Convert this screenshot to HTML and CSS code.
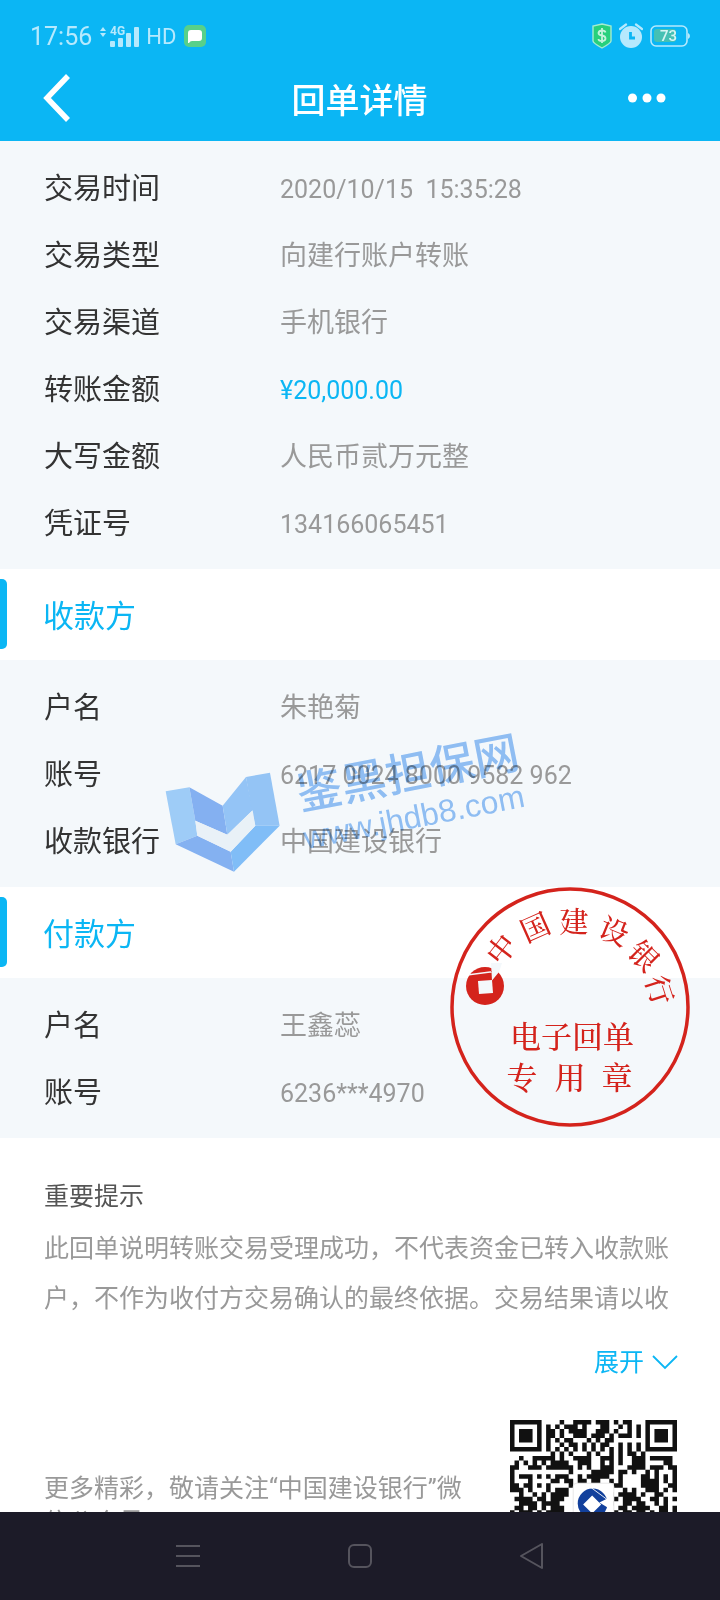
FILE: index.html
```html
<!DOCTYPE html>
<html lang="zh-CN">
<head>
  <meta charset="UTF-8">
  <meta name="viewport" content="width=device-width, initial-scale=1">
  <title>回单详情</title>
  <link rel="stylesheet" href="styles.css">
</head>
<body>
  <header class="header">
    <div class="status">
      <div class="status-left">
        <span class="time">17:56</span>
        <svg width="40" height="24" viewBox="0 0 40 24" fill="currentColor" aria-hidden="true">
          <path d="M0 7l3-4 3 4zM0 9l3 4 3-4z"/>
          <text class="net" x="10" y="11">4G</text>
          <rect x="10" y="17" width="5" height="6" rx="1"/>
          <rect x="18" y="14" width="5" height="9" rx="1"/>
          <rect x="26" y="9" width="5" height="14" rx="1"/>
          <rect x="34" y="3" width="5" height="20" rx="1"/>
        </svg>
        <span class="hd">HD</span>
        <svg class="msg" width="22" height="22" viewBox="0 0 22 22" aria-hidden="true">
          <rect width="22" height="22" rx="5" fill="#58d08a"/>
          <path d="M4 8q0-3 3-3h8q3 0 3 3v5q0 3-3 3H8q-2 0-3 2H4z" fill="#fff"/>
        </svg>
      </div>
      <div class="status-right">
        <svg width="20" height="26" viewBox="0 0 20 26" aria-hidden="true">
          <path d="M10 1l9 2v15q0 2-9 7-9-5-9-7V3z" fill="#27d07c" stroke="#a5ecd0" stroke-width="1.4"/>
          <path d="M13.5 9.500q-.5-2-3.500-2t-3.500 2.500q0 2 3.500 2.500t3.500 3q0 2.500-3.500 2.500t-3.500-2M10 5v15" fill="none" stroke="#c3f3dc" stroke-width="1.800"/>
        </svg>
        <svg width="24" height="26" viewBox="0 0 24 26" aria-hidden="true">
          <circle cx="12" cy="14" r="11" fill="currentColor"/>
          <path d="M1 6l6-4.500M23 6l-6-4.500" stroke="currentColor" stroke-width="2.200" stroke-linecap="round"/>
          <path d="M11.500 9v6h4.500" fill="none" stroke="#0bb6f4" stroke-width="2.800"/>
        </svg>
        <svg width="40" height="22" viewBox="0 0 40 22" aria-hidden="true">
          <rect x="1" y="1" width="36" height="20" rx="5" fill="none" stroke="currentColor" stroke-width="1.600"/>
          <path d="M38 8q2 1 2 3t-2 3z" fill="currentColor"/>
          <rect x="4" y="4" width="22" height="13" rx="3" fill="#45c0b4"/>
          <text class="level" x="10" y="16">73</text>
        </svg>
      </div>
    </div>
    <div class="bar">
      <button class="icon-btn back" aria-label="返回">
        <svg width="28" height="48" viewBox="0 0 28 48"><path d="M25 2L4 24l21 22" fill="none" stroke="#fff" stroke-width="5.500"/></svg>
      </button>
      <h1>回单详情</h1>
      <button class="icon-btn more" aria-label="更多">
        <svg width="38" height="10" viewBox="0 0 38 10" fill="#fff"><circle cx="4.500" cy="5" r="4.500"/><circle cx="19" cy="5" r="4.500"/><circle cx="33" cy="5" r="4.500"/></svg>
      </button>
    </div>
  </header>

  <main class="content">
    <dl class="details">
      <dt>交易时间</dt><dd class="num">2020/10/15  15:35:28</dd>
      <dt>交易类型</dt><dd>向建行账户转账</dd>
      <dt>交易渠道</dt><dd>手机银行</dd>
      <dt>转账金额</dt><dd class="num amount">¥20,000.00</dd>
      <dt>大写金额</dt><dd>人民币贰万元整</dd>
      <dt>凭证号</dt><dd class="num">134166065451</dd>
    </dl>

    <section class="party">
      <h2>收款方</h2>
      <dl class="details">
        <dt>户名</dt><dd>朱艳菊</dd>
        <dt>账号</dt><dd class="num">6217 0024 8000 9582 962</dd>
        <dt>收款银行</dt><dd>中国建设银行</dd>
      </dl>
      <svg class="watermark" width="370" height="150" viewBox="0 0 370 150" aria-hidden="true">
        <g transform="translate(-10 -60) scale(.3333)">
          <path d="M47 364l71-12 18 100 6 45-65 26z" fill="#a5d2fb"/>
          <path d="M118 352l100 55 14 87-96-42z" fill="#8ab5f5"/>
          <path d="M218 407l70-86 20 100-76 73z" fill="#9bcafa"/>
          <path d="M288 321l72-13 29 159h-73l-11-46z" fill="#9bcaf9"/>
          <path d="M77 523l65-26 100 48 10 60z" fill="#8ab6f5"/>
          <path d="M242 545l74-78h73L252 605z" fill="#86c3fb"/>
          <path d="M136 452l96 42 76-73 8 46-74 78-100-48z" fill="#f4f8fb"/>
        </g>
        <g class="mark-text">
          <text class="mark-name" x="248" y="59" transform="rotate(-11 248 43)">鉴黑担保网</text>
          <text class="mark-url" x="254" y="98" transform="rotate(-11 254 87)">www.jhdb8.com</text>
        </g>
      </svg>
    </section>

    <section class="party">
      <h2>付款方</h2>
      <dl class="details">
        <dt>户名</dt><dd>王鑫蕊</dd>
        <dt>账号</dt><dd class="num">6236***4970</dd>
      </dl>
      <svg class="stamp" width="240" height="240" viewBox="0 0 240 240" aria-label="电子回单专用章">
        <circle cx="120" cy="120" r="118" fill="none" stroke="#d4231c" stroke-width="3.500"/>
        <g class="stamp-ring">
          <text x="51" y="73" transform="rotate(-52 51 62)">中</text>
          <text x="85" y="51" transform="rotate(-24 85 40)">国</text>
          <text x="124" y="46">建</text>
          <text x="164" y="55" transform="rotate(22 164 44)">设</text>
          <text x="194" y="80" transform="rotate(45 194 69)">银</text>
          <text x="210" y="114" transform="rotate(72 210 103)">行</text>
        </g>
        <circle cx="35" cy="99" r="19" fill="#d4231c"/>
        <path class="cut" d="M41 76l1 17.500 7-8.500 3-9zM19 87l23-3v1.500l-23 3z"/>
        <path class="cut" d="M28 94l14-1 1 13-14 1z"/>
        <g class="stamp-text">
          <text x="122" y="161">电子回单</text>
          <text x="72" y="202">专</text>
          <text x="120" y="202">用</text>
          <text x="167" y="202">章</text>
        </g>
      </svg>
    </section>

    <section class="notice">
      <h3>重要提示</h3>
      <p>此回单说明转账交易受理成功，不代表资金已转入收款账户，不作为收付方交易确认的最终依据。交易结果请以收</p>
      <button class="expand">展开
        <svg width="26" height="16" viewBox="0 0 26 16" aria-hidden="true"><path d="M1 1l12 12L25 1" fill="none" stroke="currentColor" stroke-width="1.800"/></svg>
      </button>
    </section>

    <section class="follow">
      <p>更多精彩，敬请关注“中国建设银行”微信公众号</p>
      <svg id="qr" width="167" height="167" viewBox="0 0 37 37" role="img" aria-label="二维码">
        <path id="qr-modules" fill="#111"/>
        <rect x="14" y="14" width="9" height="9" rx=".8" fill="#fff" stroke="#e4e4e4" stroke-width=".2"/>
        <circle cx="18.300" cy="18.500" r="3.300" fill="#12409c"/>
        <path d="M18.200 16.700l2 2-2 2-2-2zM19.800 18.300l2-1v2.200z" fill="#fff"/>
        <path d="M18 15l3.500 2.600" stroke="#fff" stroke-width=".2"/>
      </svg>
    </section>
  </main>

  <nav class="sysnav">
    <button class="icon-btn" aria-label="菜单">
      <svg width="24" height="24" viewBox="0 0 24 24"><path d="M0 2h24M0 12h24M0 22h24"/></svg>
    </button>
    <button class="icon-btn" aria-label="主页">
      <svg width="24" height="24" viewBox="0 0 24 24"><rect x="1" y="1" width="22" height="22" rx="5"/></svg>
    </button>
    <button class="icon-btn" aria-label="后退">
      <svg width="24" height="26" viewBox="0 0 24 26"><path d="M22 1v24L1 13z" stroke-linejoin="round"/></svg>
    </button>
  </nav>

  <script src="script.js"></script>
</body>
</html>
```

FILE: styles.css
```css
* {
  box-sizing: border-box;
}

body {
  margin: 0;
  height: 100vh;
  display: flex;
  flex-direction: column;
  overflow: hidden;
  background: #fff;
  color: #333;
  font-family: Roboto, "Noto Sans CJK SC", sans-serif;
}

h1, h2, h3, p, dl, dd {
  margin: 0;
  font-weight: 400;
}

svg {
  display: block;
  flex: none;
}

button {
  font: inherit;
  color: inherit;
  background: none;
  border: 0;
  padding: 0;
  cursor: pointer;
}

/* header */
.header {
  flex: none;
  background: #0bb6f4;
  color: #fff;
}

.status {
  display: flex;
  justify-content: space-between;
  height: 60px;
  padding: 12px 30px 0;
  color: #b6e9fd;
}

.status-left,
.status-right {
  display: flex;
  align-items: center;
}

.status-left {
  gap: 6px;
}

.status-right {
  gap: 7px;
}

.time {
  font-size: 25px;
  margin-right: 2px;
}

.hd {
  font-size: 22px;
}

.msg {
  margin-left: 2px;
}

.net {
  font-size: 12px;
  font-weight: 700;
}

.level {
  font-size: 15px;
  font-weight: 500;
  fill: #d6f5f4;
}

.bar {
  display: grid;
  grid-template-columns: 1fr auto 1fr;
  align-items: center;
  height: 81px;
  padding: 0 54px 5px 43px;
}

.bar h1 {
  font-size: 34px;
  font-weight: 500;
  line-height: 50px;
  padding: 5px 0 0 10px;
}

.more {
  justify-self: end;
}

.back {
  justify-self: start;
}

/* content */
.content {
  flex: 1;
  min-height: 0;
  overflow: hidden;
}

.details {
  display: grid;
  grid-template-columns: 236px 1fr;
  padding: 15px 44px 11px;
  background: #f4f8fb;
  line-height: 67px;
}

.details dt {
  font-size: 29px;
}

.details dd {
  font-size: 27px;
  color: #999;
}

.details .num {
  font-size: 25px;
  white-space: pre;
}

.details .amount {
  color: #0bb6f4;
}

.party {
  position: relative;
}

.party h2 {
  display: flex;
  align-items: center;
  height: 91px;
  padding-bottom: 2px;
  font-size: 31px;
  color: #0bb6f4;
}

.party h2::before {
  content: "";
  width: 7px;
  height: 70px;
  margin-right: 36px;
  border-radius: 0 5px 5px 0;
  background: #0bb6f4;
}

.watermark {
  position: absolute;
  top: 161px;
  left: 160px;
  pointer-events: none;
  mix-blend-mode: multiply;
}

.mark-text {
  fill: #4f9bf0;
  opacity: .6;
  text-anchor: middle;
}

.mark-name {
  font-size: 45px;
  font-weight: 500;
}

.mark-url {
  font-family: "Liberation Sans", Arial, sans-serif;
  font-size: 32px;
}

.stamp {
  position: absolute;
  top: 0;
  right: 30px;
  pointer-events: none;
}

.stamp text {
  fill: #d4231c;
  font-family: "Noto Serif CJK SC", "Noto Sans CJK SC", serif;
  font-weight: 500;
  text-anchor: middle;
}

.stamp-ring {
  font-size: 29px;
}

.stamp-text {
  font-size: 31px;
}

.stamp .cut {
  fill: #f4f8fb;
}

/* notice */
.notice {
  padding: 34px 44px 0;
  font-size: 25px;
  line-height: 50px;
  color: #999;
}

.notice h3 {
  margin-bottom: 2px;
  font-size: 25px;
  color: #555;
}

.expand {
  display: flex;
  align-items: center;
  gap: 8px;
  margin: 14px -2px 0 auto;
  color: #0bb6f4;
}

.follow {
  display: flex;
  justify-content: space-between;
  align-items: center;
  padding: 32px 43px 32px 44px;
}

.follow p {
  max-width: 430px;
  padding-top: 5px;
  font-size: 25px;
  line-height: 34px;
  color: #999;
}

/* system navigation */
.sysnav {
  flex: none;
  display: flex;
  justify-content: center;
  align-items: center;
  gap: 148px;
  height: 88px;
  background: #1c1b28;
}

.sysnav svg {
  fill: none;
  stroke: #55545d;
  stroke-width: 2;
}
```

FILE: script.js
```javascript
const rows = [
  '#######....#..####.###.#.##...#######',
  '#.....#.#.#.###.#...##..#.#.#.#.....#',
  '#.###.#.##.#.####..###.#..#.#.#.###.#',
  '#.###.#.##.#..###.###.#.###.#.#.###.#',
  '#.###.#.#.#.##...#.#.##.......#.###.#',
  '#.....#.#..#.##.#.#.##..#.#.#.#.....#',
  '#######.#.#.#.#.#.#.#.#.#.#.#.#######',
  '.........#.#.#...#.#..#.#.##.#.......',
  '..#..#####.#..####..###.#..###.#####.',
  '.#.#.#.#.####..###..#.#.#..###....##.',
  '##..###.######.#.#..###...####.###.##',
  '#............#....#####.##.#..#.#...#',
  '#.###.#.#.###..#.#####..#....##.#.#.#',
  '#...#....##.##.##.##..#.#....####.#.#',
  '##.##.#.#....#.........##....####..##',
  '###.#...#.###............#.#..###.#.#',
  '..#..#.#.####.........#.####.#..##...',
  '.####.##.###...........#.####..##.#.#',
  '..####.####...........#..##.##..#.#..',
  '.##.##.#.###............##.####..##.#',
  '#.###.#.####...........#.##.##.#.##.#'
];

// one square per dark module
let d = '';
rows.forEach((row, y) => {
  for (let x = 0; x < row.length; x++) {
    if (row[x] === '#') d += `M${x} ${y}h1v1h-1z`;
  }
});
document.getElementById('qr-modules').setAttribute('d', d);
```
